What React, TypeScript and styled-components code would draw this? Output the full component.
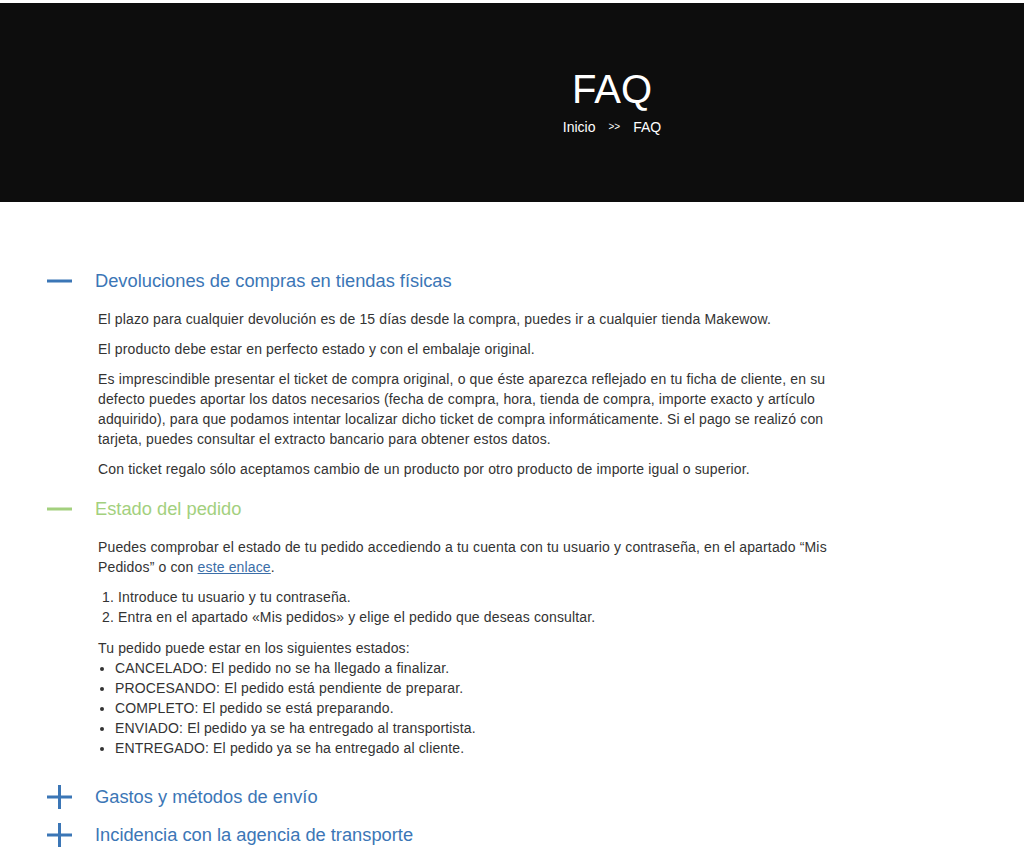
import React from "react";
import styled, { createGlobalStyle } from "styled-components";

const GlobalStyle = createGlobalStyle`
  html, body { margin: 0; padding: 0; background: #ffffff; }
  body { font-family: "Liberation Sans", Arial, sans-serif; color: #333333; }
`;

const Page = styled.div`
  padding-top: 3px;
`;

const Hero = styled.header`
  height: 199px;
  background: #0d0d0d;
  display: flex;
  flex-direction: column;
  align-items: center;
  justify-content: center;
  padding-left: 200px;
  padding-bottom: 3px;
  box-sizing: border-box;
  color: #ffffff;
`;

const HeroTitle = styled.h1`
  margin: 0;
  font-size: 40px;
  line-height: 46px;
  font-weight: 400;
`;

const Crumbs = styled.nav`
  margin-top: 5px;
  display: flex;
  align-items: center;
  gap: 13px;
  font-size: 14px;
  line-height: 20px;
`;

const CrumbSep = styled.span`
  font-size: 10px;
`;

const Content = styled.main`
  padding: 60px 0 0 47px;
`;

const Item = styled.section``;

const ItemHeader = styled.div`
  display: flex;
  align-items: center;
  height: 38px;
`;

const IconBox = styled.span`
  width: 48px;
  display: flex;
  align-items: center;
  flex-shrink: 0;
`;

const ItemTitle = styled.h3<{ $green?: boolean }>`
  margin: 0;
  font-size: 18.3px;
  font-weight: 400;
  line-height: 38px;
  color: ${(p) => (p.$green ? "#a3d07e" : "#3b76b6")};
`;

const Body = styled.div`
  padding: 9px 0 1px 51px;
  max-width: 735px;
  font-size: 14px;
  line-height: 20px;
  letter-spacing: 0.15px;
  color: #333333;
`;

const P = styled.p<{ $tight?: boolean }>`
  margin: 0 0 ${(p) => (p.$tight ? "0" : "10px")};
`;

const OL = styled.ol`
  margin: 0 0 11px;
  padding-left: 20px;
`;

const UL = styled.ul<{ $last?: boolean }>`
  margin: 0 0 ${(p) => (p.$last ? "19px" : "10px")};
  padding-left: 17px;
`;

const Link = styled.a`
  color: #3b6ea8;
  text-decoration: underline;
`;

const Minus = ({ color }: { color: string }) => (
  <svg width="25" height="24" viewBox="0 0 25 24">
    <rect x="0" y="10.5" width="25" height="3" fill={color} />
  </svg>
);

const Plus = ({ color }: { color: string }) => (
  <svg width="25" height="24" viewBox="0 0 25 24">
    <rect x="0" y="10.5" width="25" height="3" fill={color} />
    <rect x="11" y="0" width="3" height="24" fill={color} />
  </svg>
);

const BLUE = "#3b76b6";
const GREEN = "#a3d07e";

export default function App() {
  return (
    <>
      <GlobalStyle />
      <Page>
        <Hero>
          <HeroTitle>FAQ</HeroTitle>
          <Crumbs>
            <span>Inicio</span>
            <CrumbSep>&gt;&gt;</CrumbSep>
            <span>FAQ</span>
          </Crumbs>
        </Hero>
        <Content>
          <Item>
            <ItemHeader>
              <IconBox>
                <Minus color={BLUE} />
              </IconBox>
              <ItemTitle>Devoluciones de compras en tiendas físicas</ItemTitle>
            </ItemHeader>
            <Body>
              <P>
                El plazo para cualquier devolución es de 15 días desde la compra, puedes ir a cualquier
                tienda Makewow.
              </P>
              <P>El producto debe estar en perfecto estado y con el embalaje original.</P>
              <P>
                Es imprescindible presentar el ticket de compra original, o que éste aparezca reflejado
                en tu ficha de cliente, en su defecto puedes aportar los datos necesarios (fecha de
                compra, hora, tienda de compra, importe exacto y artículo adquirido), para que podamos
                intentar localizar dicho ticket de compra informáticamente. Si el pago se realizó con
                tarjeta, puedes consultar el extracto bancario para obtener estos datos.
              </P>
              <P>
                Con ticket regalo sólo aceptamos cambio de un producto por otro producto de importe
                igual o superior.
              </P>
            </Body>
          </Item>
          <Item>
            <ItemHeader>
              <IconBox>
                <Minus color={GREEN} />
              </IconBox>
              <ItemTitle $green>Estado del pedido</ItemTitle>
            </ItemHeader>
            <Body>
              <P>
                Puedes comprobar el estado de tu pedido accediendo a tu cuenta con tu usuario y
                contraseña, en el apartado “Mis Pedidos” o con <Link href="#">este enlace</Link>.
              </P>
              <OL>
                <li>Introduce tu usuario y tu contraseña.</li>
                <li>Entra en el apartado «Mis pedidos» y elige el pedido que deseas consultar.</li>
              </OL>
              <P $tight>Tu pedido puede estar en los siguientes estados:</P>
              <UL $last>
                <li>CANCELADO: El pedido no se ha llegado a finalizar.</li>
                <li>PROCESANDO: El pedido está pendiente de preparar.</li>
                <li>COMPLETO: El pedido se está preparando.</li>
                <li>ENVIADO: El pedido ya se ha entregado al transportista.</li>
                <li>ENTREGADO: El pedido ya se ha entregado al cliente.</li>
              </UL>
            </Body>
          </Item>
          <Item>
            <ItemHeader>
              <IconBox>
                <Plus color={BLUE} />
              </IconBox>
              <ItemTitle>Gastos y métodos de envío</ItemTitle>
            </ItemHeader>
          </Item>
          <Item>
            <ItemHeader>
              <IconBox>
                <Plus color={BLUE} />
              </IconBox>
              <ItemTitle>Incidencia con la agencia de transporte</ItemTitle>
            </ItemHeader>
          </Item>
        </Content>
      </Page>
    </>
  );
}
